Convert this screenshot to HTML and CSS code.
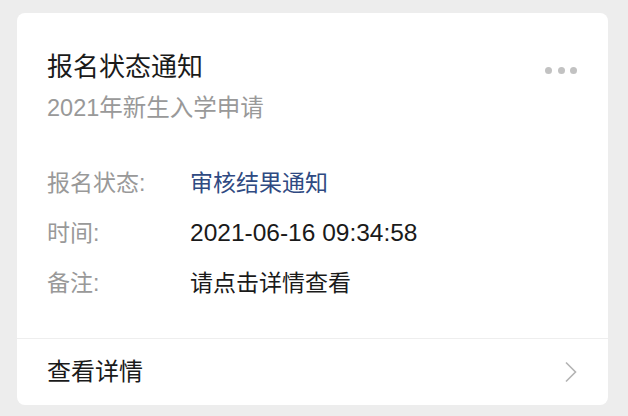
FILE: index.html
```html
<!DOCTYPE html>
<html lang="zh-CN">
<head>
<meta charset="utf-8">
<title>报名状态通知</title>
<link rel="stylesheet" href="styles.css">
</head>
<body>
<div class="card">
  <div class="body">
    <div class="head">
      <div class="titles">
        <div class="title">报名状态通知</div>
        <div class="subtitle">2021年新生入学申请</div>
      </div>
      <div class="more"><span></span><span></span><span></span></div>
    </div>
    <div class="rows">
      <div class="row"><span class="label">报名状态:</span><span class="value blue">审核结果通知</span></div>
      <div class="row"><span class="label">时间:</span><span class="value num">2021-06-16 09:34:58</span></div>
      <div class="row"><span class="label">备注:</span><span class="value">请点击详情查看</span></div>
    </div>
  </div>
  <div class="footer">
    <span class="link">查看详情</span>
    <svg class="chev" width="14" height="22" viewBox="0 0 14 22"><path d="M2 1.5 L11.5 11 L2 20.5" fill="none" stroke="#b3b3b3" stroke-width="1.6"/></svg>
  </div>
</div>
</body>
</html>
```
FILE: styles.css
```css
html, body {
  margin: 0;
  padding: 0;
  background: #ededed;
}
body {
  font-family: "Liberation Sans", "Noto Sans CJK SC", sans-serif;
  padding: 13px 20px 11px 17px;
}
.card {
  background: #fff;
  border-radius: 8px;
  width: 591px;
  height: 392px;
  display: flex;
  flex-direction: column;
  box-sizing: border-box;
}
.body {
  padding: 36px 30px 30px 30px;
}
.head {
  display: flex;
  justify-content: space-between;
  align-items: flex-start;
}
.title {
  font-size: 26px;
  line-height: 36px;
  color: #1a1a1a;
}
.subtitle {
  font-size: 23.5px;
  line-height: 30px;
  margin-top: 8px;
  color: #999;
}
.more {
  display: flex;
  gap: 5.5px;
  margin-top: 18px;
  margin-right: 1px;
}
.more span {
  width: 7px;
  height: 7px;
  border-radius: 50%;
  background: #c2c2c2;
}
.rows {
  margin-top: 35px;
}
.row {
  display: flex;
  font-size: 23px;
  line-height: 50px;
}
.label {
  width: 143px;
  color: #999;
}
.value {
  color: #1a1a1a;
}
.value.num {
  font-size: 24.5px;
}
.value.blue {
  color: #2f4a82;
}
.footer {
  flex: 1;
  border-top: 1px solid #eeeeee;
  display: flex;
  align-items: center;
  justify-content: space-between;
  padding: 0 30px;
}
.link {
  font-size: 24px;
  color: #1a1a1a;
  margin-top: -5px;
}
.chev {
  margin-top: -1px;
}
```
